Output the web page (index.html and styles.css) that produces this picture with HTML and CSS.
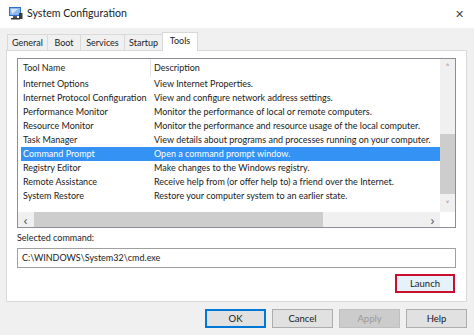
FILE: index.html
```html
<!DOCTYPE html>
<html lang="en">
<head>
<meta charset="UTF-8" />
<title>System Configuration</title>
<link rel="stylesheet" href="styles.css">
</head>
<body>

<div class="window">
  <div class="titlebar">
    <svg class="app-icon" width="15" height="14" viewBox="0 0 15 14">
      <rect x="1" y="1" width="12" height="9" fill="#2f6fcf"/>
      <rect x="2" y="2" width="10" height="7" fill="#8ab8f0"/>
      <path d="M3 3 L10 3 L4 8 Z" fill="#d6e8fb"/>
      <rect x="5" y="10" width="4" height="2" fill="#555"/>
      <rect x="3" y="12" width="9" height="1.5" fill="#333"/>
      <rect x="11" y="7" width="3.5" height="6" fill="#3a3a3a"/>
    </svg>
    <span class="title">System Configuration</span>
    <span class="close">&#x2715;</span>
  </div>

  <div class="tabs">
    <div class="tab t-general">General</div>
    <div class="tab t-boot">Boot</div>
    <div class="tab t-services">Services</div>
    <div class="tab t-startup">Startup</div>
    <div class="tab t-tools active">Tools</div>
  </div>

  <div class="panel">
    <div class="listbox">
      <div class="list-main">
        <div class="list-view">
          <div class="list-head">
            <div class="col-name">Tool Name</div>
            <div class="col-desc">Description</div>
          </div>
          <div class="row"><div class="col-name">Internet Options</div><div class="col-desc">View Internet Properties.</div></div>
          <div class="row"><div class="col-name">Internet Protocol Configuration</div><div class="col-desc">View and configure network address settings.</div></div>
          <div class="row"><div class="col-name">Performance Monitor</div><div class="col-desc">Monitor the performance of local or remote computers.</div></div>
          <div class="row"><div class="col-name">Resource Monitor</div><div class="col-desc">Monitor the performance and resource usage of the local computer.</div></div>
          <div class="row"><div class="col-name">Task Manager</div><div class="col-desc">View details about programs and processes running on your computer.</div></div>
          <div class="row selected"><div class="col-name">Command Prompt</div><div class="col-desc">Open a command prompt window.</div></div>
          <div class="row"><div class="col-name">Registry Editor</div><div class="col-desc">Make changes to the Windows registry.</div></div>
          <div class="row"><div class="col-name">Remote Assistance</div><div class="col-desc">Receive help from (or offer help to) a friend over the Internet.</div></div>
          <div class="row"><div class="col-name">System Restore</div><div class="col-desc">Restore your computer system to an earlier state.</div></div>
        </div>
        <div class="vscroll">
          <span class="arrow">&#x2C4;</span>
          <div class="vtrack"><div class="vthumb"></div></div>
          <span class="arrow">&#x2C5;</span>
        </div>
      </div>
      <div class="list-bottom">
        <div class="hscroll">
          <span class="arrow">&#x2039;</span>
          <div class="htrack"><div class="hthumb"></div></div>
          <span class="arrow">&#x203A;</span>
        </div>
        <div class="corner"></div>
      </div>
    </div>

    <div class="label">Selected command:</div>
    <div class="command">C:\WINDOWS\System32\cmd.exe</div>

    <div class="launch-row">
      <button class="btn launch">Launch</button>
    </div>
  </div>

  <div class="footer">
    <button class="btn default">OK</button>
    <button class="btn">Cancel</button>
    <button class="btn disabled">Apply</button>
    <button class="btn">Help</button>
  </div>
</div>

</body>
</html>
```

FILE: styles.css
```css
body {
  margin: 0;
  font-family: Lato, 'Noto Sans', sans-serif;
  font-size: 9px;
  color: #1a1a1a;
  background: #f0f0f0;
}
.window {
  width: 474px;
  height: 335px;
  background: #f0f0f0;
  overflow: hidden;
}
.titlebar {
  height: 28px;
  background: #fff;
  display: flex;
  align-items: center;
  padding: 0 10px 0 8px;
}
.app-icon {
  margin-right: 4px;
  margin-top: -2px;
}
.title {
  font-size: 10.6px;
  color: #222;
  flex: 1;
  margin-top: -2px;
}
.close {
  font-family: 'Noto Sans', sans-serif;
  font-size: 11px;
  color: #444;
  margin-top: -2px;
}

/* tabs */
.tabs {
  display: flex;
  align-items: flex-end;
  height: 22px;
  padding-left: 7px;
}
.tab {
  height: 16px;
  line-height: 15px;
  text-align: center;
  border: 1px solid #d9d9d9;
  border-bottom: none;
  margin-left: -1px;
  background: #f0f0f0;
  color: #222;
  box-sizing: border-box;
}
.t-general { width: 41px; margin-left: 0; }
.t-boot { width: 34px; }
.t-services { width: 45px; }
.t-startup { width: 39px; }
.t-tools { width: 36px; }
.tab.active {
  height: 19px;
  line-height: 16px;
  background: #fff;
  position: relative;
  top: 1px;
  z-index: 1;
}

.panel {
  margin: 0 7px 0 6px;
  height: 252px;
  background: #fff;
  border: 1px solid #d9d9d9;
  box-sizing: border-box;
  padding: 7px 10px 0 10px;
}

/* list view */
.listbox {
  height: 170px;
  border: 1px solid #8a8f96;
  box-sizing: border-box;
  display: flex;
  flex-direction: column;
}
.list-main {
  flex: 1;
  display: flex;
  overflow: hidden;
}
.list-view {
  flex: 1;
  overflow: hidden;
  padding-left: 3px;
}
.list-head, .row {
  display: grid;
  grid-template-columns: 129px 1fr;
  white-space: nowrap;
}
.list-head {
  height: 18px;
  line-height: 18px;
  color: #222;
}
.list-head .col-desc {
  border-left: 1px solid #e5e5e5;
  padding-left: 3px;
}
.row {
  height: 14px;
  line-height: 14px;
}
.col-name {
  padding-left: 2px;
  overflow: hidden;
}
.row .col-desc {
  padding-left: 4px;
  overflow: hidden;
}
.row.selected {
  background: #3392f4;
  color: #fff;
}

.vscroll {
  width: 15px;
  background: #f0f0f0;
  display: flex;
  flex-direction: column;
  align-items: center;
}
.vscroll .arrow {
  height: 16px;
  line-height: 18px;
  font-family: 'Noto Sans', sans-serif;
  font-size: 11px;
  color: #606060;
}
.vtrack {
  flex: 1;
  width: 100%;
  position: relative;
}
.vthumb {
  position: absolute;
  left: 0;
  right: 0;
  top: 59px;
  height: 60px;
  background: #cdcdcd;
}
.list-bottom {
  height: 15px;
  display: flex;
}
.hscroll {
  flex: 1;
  display: flex;
  align-items: center;
  background: #f0f0f0;
}
.hscroll .arrow {
  width: 15px;
  text-align: center;
  font-family: 'Noto Sans', sans-serif;
  font-size: 13px;
  line-height: 14px;
  color: #606060;
}
.htrack {
  flex: 1;
  height: 100%;
  position: relative;
}
.hthumb {
  position: absolute;
  top: 0;
  bottom: 0;
  left: 1px;
  width: 289px;
  background: #cdcdcd;
}
.corner {
  width: 15px;
  background: #fff;
}

.label {
  margin-top: 3px;
  height: 14px;
  line-height: 14px;
  color: #222;
}
.command {
  margin-top: 3px;
  height: 20px;
  line-height: 18px;
  border: 1px solid #a0a0a0;
  box-sizing: border-box;
  padding-left: 4px;
}

.launch-row {
  display: flex;
  justify-content: flex-end;
  margin-top: 6px;
  padding-right: 1px;
}

/* buttons */
.btn {
  font-family: inherit;
  font-size: 9.5px;
  width: 61px;
  height: 19px;
  padding: 0;
  background: #e1e1e1;
  border: 1px solid #adadad;
  color: #1a1a1a;
}
.btn.launch {
  width: 60px;
  background: #e5f1fb;
  border: 2px solid #c8102e;
}
.btn.default {
  border: 2px solid #0078d7;
}
.btn.disabled {
  background: #cccccc;
  border-color: #bfbfbf;
  color: #9a9a9a;
}
.footer {
  display: flex;
  justify-content: flex-end;
  gap: 6px;
  padding: 7px 7px 0 0;
}
```
